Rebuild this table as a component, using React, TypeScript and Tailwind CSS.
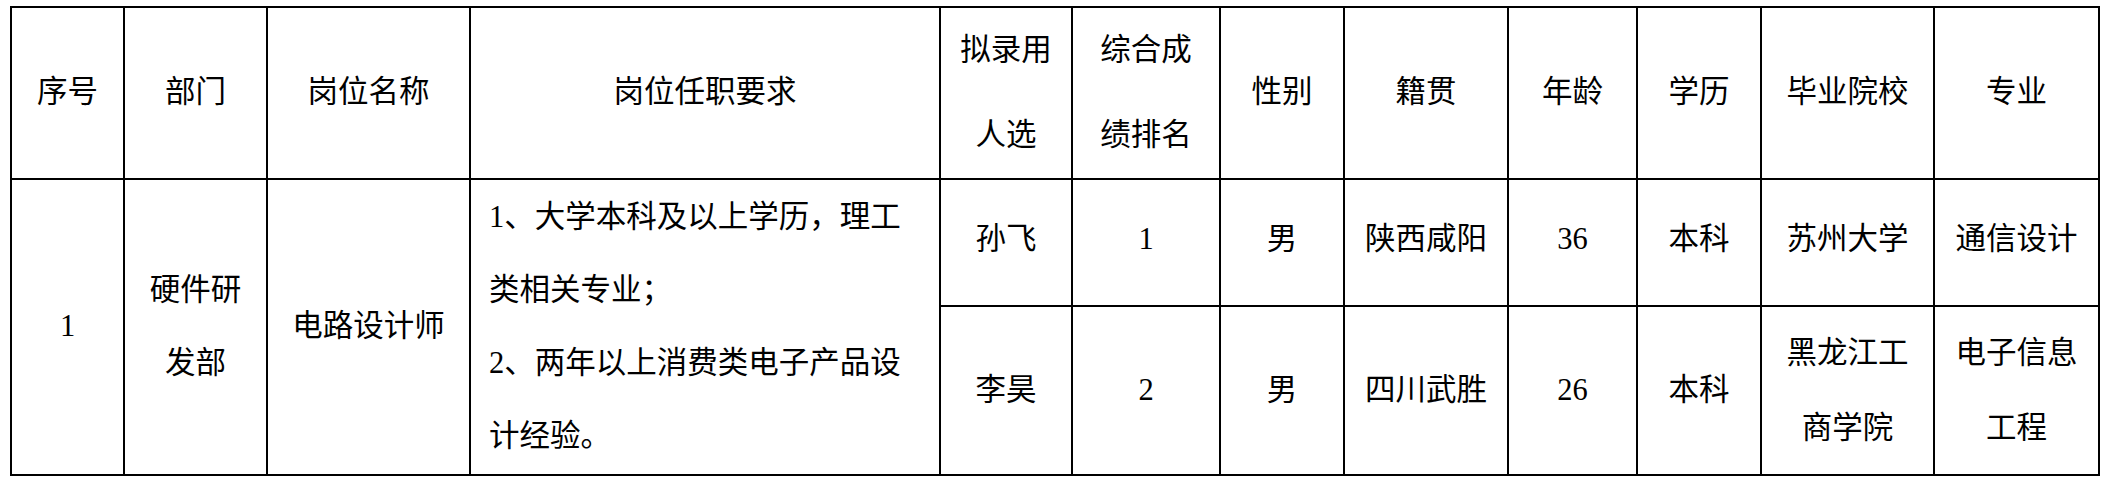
import React from "react";

const FONT = { fontFamily: '"Liberation Serif", "Noto Sans CJK SC", serif' };

const widths = [113, 143, 203, 470, 132, 148, 124, 164, 129, 124, 173, 165];

const th = "border-2 border-black p-0 text-center align-middle font-normal";
const td = "border-2 border-black p-0 text-center align-middle";
const td1 = "border-2 border-black p-0 pb-[6px] text-center align-middle";

function Two({ a, b, lh }: { a: string; b: string; lh: string }) {
  return (
    <div className={lh}>
      <div>{a}</div>
      <div>{b}</div>
    </div>
  );
}

export default function App() {
  return (
    <div className="bg-white w-[2112px] h-[481px] pt-[6px] pl-[10px] text-black text-[30.5px]" style={FONT}>
      <table className="table-fixed border-collapse border-2 border-black w-[2090px]">
        <colgroup>
          {widths.map((w, i) => (
            <col key={i} style={{ width: w }} />
          ))}
        </colgroup>
        <thead>
          <tr className="h-[169px]">
            <th className={th}>序号</th>
            <th className={th}>部门</th>
            <th className={th}>岗位名称</th>
            <th className={th}>岗位任职要求</th>
            <th className={th}>
              <Two a="拟录用" b="人选" lh="leading-[85px]" />
            </th>
            <th className={th}>
              <Two a="综合成" b="绩排名" lh="leading-[85px]" />
            </th>
            <th className={th}>性别</th>
            <th className={th}>籍贯</th>
            <th className={th}>年龄</th>
            <th className={th}>学历</th>
            <th className={th}>毕业院校</th>
            <th className={th}>专业</th>
          </tr>
        </thead>
        <tbody>
          <tr className="h-[127px]">
            <td className={td} rowSpan={2}>1</td>
            <td className={td} rowSpan={2}>
              <Two a="硬件研" b="发部" lh="leading-[73px]" />
            </td>
            <td className={td} rowSpan={2}>电路设计师</td>
            <td className="border-2 border-black p-0 pl-[18px] text-left align-middle leading-[73px]" rowSpan={2}>
              <div>1、大学本科及以上学历，理工</div>
              <div>类相关专业；</div>
              <div>2、两年以上消费类电子产品设</div>
              <div>计经验。</div>
            </td>
            <td className={td1}>孙飞</td>
            <td className={td1}>1</td>
            <td className={td1}>男</td>
            <td className={td1}>陕西咸阳</td>
            <td className={td1}>36</td>
            <td className={td1}>本科</td>
            <td className={td1}>苏州大学</td>
            <td className={td1}>通信设计</td>
          </tr>
          <tr className="h-[169px]">
            <td className={td}>李昊</td>
            <td className={td}>2</td>
            <td className={td}>男</td>
            <td className={td}>四川武胜</td>
            <td className={td}>26</td>
            <td className={td}>本科</td>
            <td className={td}>
              <Two a="黑龙江工" b="商学院" lh="leading-[75px]" />
            </td>
            <td className={td}>
              <Two a="电子信息" b="工程" lh="leading-[75px]" />
            </td>
          </tr>
        </tbody>
      </table>
    </div>
  );
}
